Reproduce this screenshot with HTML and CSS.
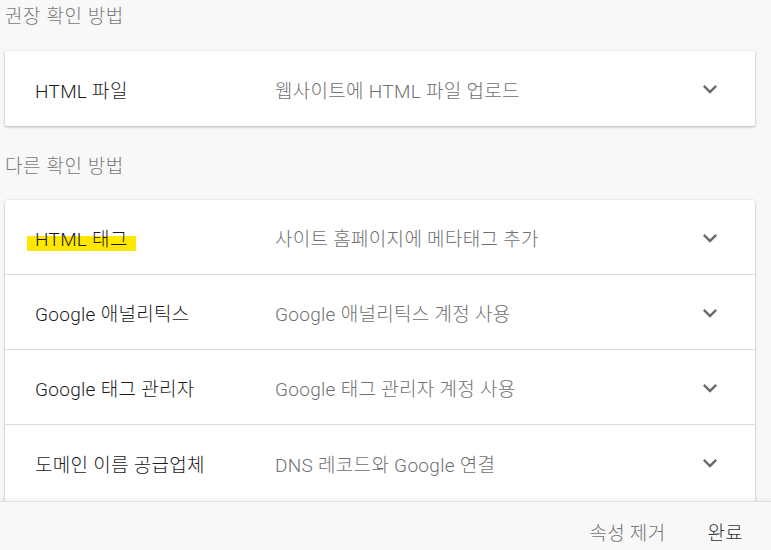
FILE: index.html
```html
<!DOCTYPE html>
<html lang="ko">
<head>
<meta charset="utf-8">
<link rel="stylesheet" href="styles.css">
</head>
<body>
<div class="page">
  <main class="content">
    <h2 class="section-title">권장 확인 방법</h2>
    <div class="card">
      <div class="row">
        <div class="row-title">HTML 파일</div>
        <div class="row-desc">웹사이트에 HTML 파일 업로드</div>
        <svg class="chev" viewBox="0 0 24 24" width="28" height="28"><path d="M7.41 8.59 12 13.17l4.59-4.58L18 10l-6 6-6-6z"/></svg>
      </div>
    </div>
    <h2 class="section-title second">다른 확인 방법</h2>
    <div class="card card-long">
      <div class="row">
        <div class="row-title"><span class="mark">HTML 태그</span></div>
        <div class="row-desc">사이트 홈페이지에 메타태그 추가</div>
        <svg class="chev" viewBox="0 0 24 24" width="28" height="28"><path d="M7.41 8.59 12 13.17l4.59-4.58L18 10l-6 6-6-6z"/></svg>
      </div>
      <div class="row">
        <div class="row-title">Google 애널리틱스</div>
        <div class="row-desc">Google 애널리틱스 계정 사용</div>
        <svg class="chev" viewBox="0 0 24 24" width="28" height="28"><path d="M7.41 8.59 12 13.17l4.59-4.58L18 10l-6 6-6-6z"/></svg>
      </div>
      <div class="row">
        <div class="row-title">Google 태그 관리자</div>
        <div class="row-desc">Google 태그 관리자 계정 사용</div>
        <svg class="chev" viewBox="0 0 24 24" width="28" height="28"><path d="M7.41 8.59 12 13.17l4.59-4.58L18 10l-6 6-6-6z"/></svg>
      </div>
      <div class="row">
        <div class="row-title">도메인 이름 공급업체</div>
        <div class="row-desc">DNS 레코드와 Google 연결</div>
        <svg class="chev" viewBox="0 0 24 24" width="28" height="28"><path d="M7.41 8.59 12 13.17l4.59-4.58L18 10l-6 6-6-6z"/></svg>
      </div>
    </div>
  </main>
  <footer class="footer">
    <button class="btn btn-secondary">속성 제거</button>
    <button class="btn btn-primary">완료</button>
  </footer>
</div>
</body>
</html>
```
FILE: styles.css
```css
* { box-sizing: border-box; }
html, body {
  margin: 0;
  padding: 0;
  background: #f8f8f8;
}
body {
  font-family: Roboto, "Noto Sans CJK KR", "Noto Sans", sans-serif;
  color: #212121;
}
.page {
  width: 771px;
  height: 550px;
  display: flex;
  flex-direction: column;
  overflow: hidden;
}
.content {
  flex: 1;
  overflow: hidden;
  padding: 5px 16px 0 5px;
}
.section-title {
  margin: 0;
  font-size: 19px;
  line-height: 24px;
  font-weight: 300;
  letter-spacing: 0.6px;
  color: #7a7a7a;
}
.section-title.second {
  margin-top: 29px;
}
.card {
  margin-top: 22px;
  background: #fff;
  border-radius: 2px;
  box-shadow: 0 1px 3px rgba(0,0,0,0.28), 0 0 1px rgba(0,0,0,0.1);
}
.section-title.second + .card {
  margin-top: 21px;
}
.card-long {
  padding-bottom: 40px;
}
.row {
  height: 75px;
  display: flex;
  align-items: center;
  padding: 1px 31px 0 30px;
  border-bottom: 1px solid #dcdcdc;
}
.row:last-child { border-bottom: none; }
.row-title {
  width: 240px;
  font-size: 19px;
  font-weight: 300;
  letter-spacing: 0.3px;
  color: #1a1a1a;
}
.row-desc {
  flex: 1;
  font-size: 19px;
  font-weight: 300;
  letter-spacing: 0.3px;
  color: #707070;
}
.chev {
  fill: #6b6b6b;
}
.mark {
  margin-left: -8px;
  padding: 0 8px;
  background: linear-gradient(to bottom, transparent 0, transparent 34%, #ffe800 34%, #ffe800 100%);
}
.footer {
  height: 49px;
  flex: none;
  border-top: 1px solid #e0e0e0;
  background: #f8f8f8;
  box-shadow: 0 -2px 4px rgba(0,0,0,0.05);
  display: flex;
  justify-content: flex-end;
  align-items: flex-end;
  padding: 0 28px 3px 0;
  gap: 42px;
}
.btn {
  border: none;
  background: none;
  padding: 0;
  font-family: Roboto, "Noto Sans CJK KR", sans-serif;
  font-size: 19px;
  font-weight: 300;
  letter-spacing: 0.3px;
  line-height: 26px;
}
.btn-secondary { color: #757575; }
.btn-primary { color: #333; }
```
